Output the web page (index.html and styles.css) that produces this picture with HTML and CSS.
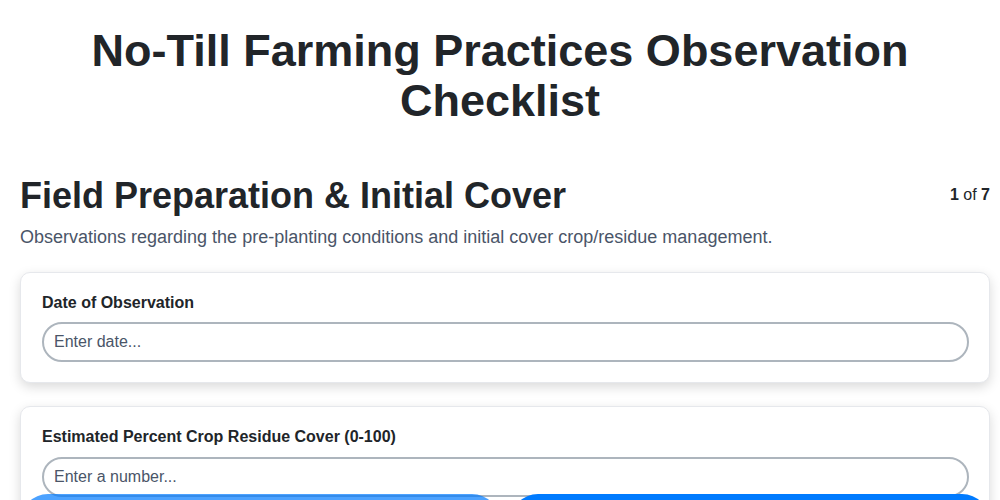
FILE: index.html
```html
<!DOCTYPE html>
<html lang="en">
<head>
<meta charset="utf-8">
<title>No-Till Farming Practices Observation Checklist</title>
<link rel="stylesheet" href="styles.css">
</head>
<body>
<header class="page-header">
  <h1 class="page-title">No-Till Farming Practices Observation Checklist</h1>
</header>
<main class="form">
  <div class="step-head">
    <h2 class="step-title">Field Preparation &amp; Initial Cover</h2>
    <span class="step-count"><b>1</b> of <b>7</b></span>
  </div>
  <p class="step-desc">Observations regarding the pre-planting conditions and initial cover crop/residue management.</p>
  <div class="card">
    <label class="field-label" for="f1">Date of Observation</label>
    <input class="field-input" id="f1" type="text" placeholder="Enter date...">
  </div>
  <div class="card">
    <label class="field-label" for="f2">Estimated Percent Crop Residue Cover (0-100)</label>
    <input class="field-input" id="f2" type="text" placeholder="Enter a number...">
  </div>
</main>
<nav class="step-nav">
  <button class="btn btn-prev" disabled>Previous</button>
  <button class="btn btn-next">Next</button>
</nav>
</body>
</html>
```

FILE: styles.css
```css
* { box-sizing: border-box; }
html, body { margin: 0; padding: 0; background: #fff; }
body {
  font-family: "Liberation Sans", Arial, Helvetica, sans-serif;
  color: #212529;
  overflow: hidden;
}
.page-header { padding: 26px 20px 0; }
.page-title {
  margin: 0;
  text-align: center;
  font-size: 45px;
  line-height: 1.11;
  font-weight: 700;
  color: #212529;
}
.form { padding: 48px 10px 20px 20px; }
.step-head {
  display: flex;
  justify-content: space-between;
  align-items: center;
}
.step-title {
  margin: 0;
  font-size: 36px;
  line-height: 1.2;
  font-weight: 700;
  color: #212529;
}
.step-count { font-size: 16px; color: #212529; }
.step-count b { font-weight: 700; }
.step-desc {
  margin: 8px 0 22px;
  font-size: 18px;
  line-height: 1.4;
  color: #4a5568;
}
.card {
  background: #fff;
  border: 1px solid #e6e8ec;
  border-radius: 10px;
  box-shadow: 0 4px 12px rgba(0, 0, 0, 0.15);
  padding: 20px 20px 20px 21px;
  margin-bottom: 23px;
}
.field-label {
  display: block;
  font-size: 16px;
  font-weight: 700;
  line-height: 1.2;
  margin-bottom: 10px;
  color: #212529;
}
.field-input {
  display: block;
  width: 100%;
  height: 40px;
  padding: 0 10px;
  border: 2px solid #adb5bd;
  border-radius: 20px;
  font-family: inherit;
  font-size: 16px;
  color: #212529;
  background: #fff;
  outline: none;
}
.field-input::placeholder { color: #4a5568; opacity: 1; }
.step-nav {
  position: fixed;
  left: 0;
  right: 0;
  top: 494px;
  display: flex;
  gap: 10px;
  padding: 0 10px 0 20px;
}
.btn {
  flex: 1;
  height: 64px;
  border: none;
  border-radius: 28px;
  background: #007bff;
  color: #fff;
  font-family: inherit;
  font-size: 16px;
  font-weight: 700;
}
.btn-prev { opacity: 0.7; }
```
